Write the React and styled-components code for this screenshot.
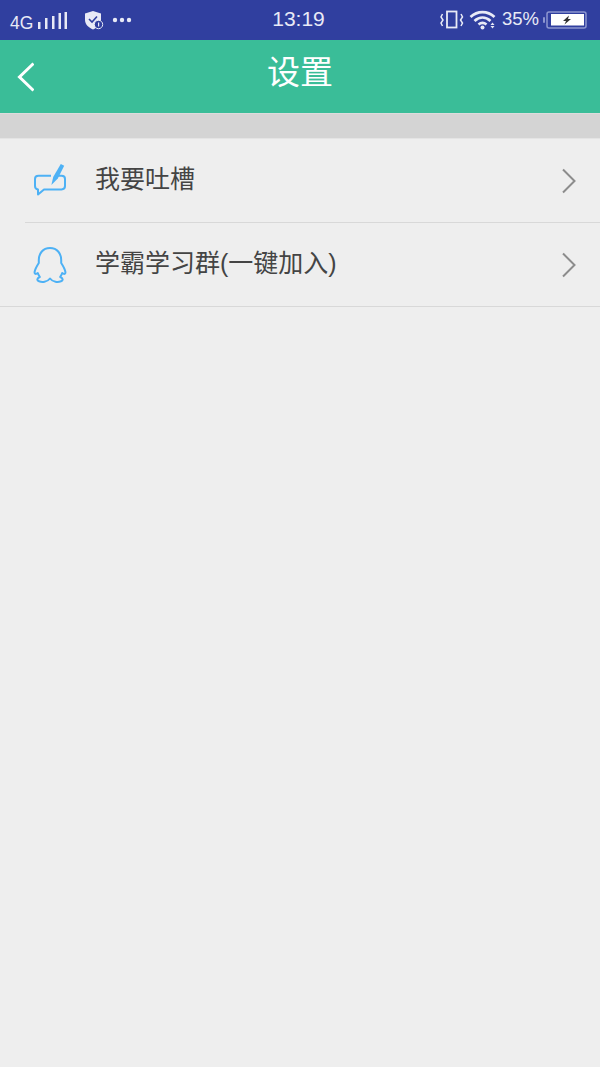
import React from 'react';
import styled, { createGlobalStyle } from 'styled-components';

const Global = createGlobalStyle`
  html, body {
    margin: 0;
    padding: 0;
    background: #eeeeee;
  }
`;

const Page = styled.div`
  width: 600px;
  height: 1067px;
  overflow: hidden;
  background: #eeeeee;
  font-family: 'Liberation Sans', 'Noto Sans CJK SC', sans-serif;
`;

const StatusBar = styled.div`
  height: 40px;
  background: #303f9f;
  color: #e8eaf6;
  display: grid;
  grid-template-columns: 1fr auto 1fr;
  align-items: center;
  padding: 0 13px 0 10px;
`;

const StatusGroup = styled.div`
  display: flex;
  align-items: center;
  justify-content: ${props => (props.$end ? 'flex-end' : 'flex-start')};
`;

const StatusText = styled.span`
  font-size: ${props => props.$size || 18}px;
  line-height: 22px;
  padding: ${props => (props.$low ? '6px 0 0' : '0 0 2px')};
  color: #e8eaf6;
`;

const Gap = styled.span`
  flex: none;
  width: ${props => props.$w}px;
`;

const Header = styled.header`
  height: 73px;
  box-sizing: border-box;
  padding-bottom: 8px;
  background: #3abd98;
  display: flex;
  align-items: center;
  justify-content: center;
  position: relative;
`;

const BackButton = styled.div`
  position: absolute;
  left: 16px;
  top: 22px;
  width: 18px;
  height: 30px;
`;

const Title = styled.h1`
  margin: 0;
  font-size: 33px;
  font-weight: 400;
  color: #ffffff;
  line-height: 40px;
`;

const Spacer = styled.div`
  height: 24px;
  background: #d4d4d4;
  border-top: 1px solid #dcdcdc;
  border-bottom: 1px solid #e4e4e4;
`;

const List = styled.div`
  display: flex;
  flex-direction: column;
`;

const Row = styled.div`
  height: 83px;
  display: flex;
  align-items: center;
  padding: 0 23px 0 ${props => (props.$inset ? '7px' : '32px')};
  border-bottom: 1px solid #d8d8d8;
  margin-left: ${props => (props.$inset ? '25px' : '0')};
`;

const IconSlot = styled.div`
  width: 36px;
  height: 40px;
  display: flex;
  align-items: center;
  justify-content: center;
  margin-right: 27px;
`;

const Label = styled.span`
  flex: 1;
  font-size: 25px;
  color: #444444;
  line-height: 30px;
  padding-bottom: 4px;
`;

const PenIcon = () => (
  <svg width="36" height="36" viewBox="0 0 36 36" fill="none">
    <path
      d="M19 12.8H6.5C4 12.8 3 14 3 16V23C3 25 4 26.2 6 26.4V31.5L12 26.4H29.5C32 26.4 33 25 33 23V16C33 14 32 12.8 29.5 12.8H26"
      stroke="#4db1f5"
      strokeWidth="2"
      strokeLinejoin="round"
    />
    <path d="M28.8 1L32.2 2.8L25.8 15.6L19.4 22L21.2 14Z" fill="#4db1f5" />
  </svg>
);

const PenguinIcon = () => (
  <svg width="36" height="40" viewBox="0 0 36 40" fill="none">
    <path
      d="M18 3C10.5 3 6.8 9 6.8 15V18C5.5 20 3 24 2.6 27C2.4 29 3.8 29.5 5.8 28C6.3 30 7.3 31 7.8 32C5 33 4.5 35.5 7 36.3C10 37.4 15 37.3 18 33.5C21 37.3 26 37.4 29 36.3C31.5 35.5 31 33 28.2 32C28.7 31 29.7 30 30.2 28C32.2 29.5 33.6 29 33.4 27C33 24 30.5 20 29.2 18V15C29.2 9 25.5 3 18 3Z"
      stroke="#4db1f5"
      strokeWidth="2"
      strokeLinejoin="round"
    />
  </svg>
);

const Chevron = () => (
  <svg width="16" height="26" viewBox="0 0 16 26" fill="none">
    <path d="M2 1.5L13.5 13L2 24.5" stroke="#8c8c8c" strokeWidth="2" />
  </svg>
);

const SignalIcon = () => (
  <svg width="32" height="20" viewBox="0 0 32 20" fill="#e8eaf6">
    <rect x="1" y="12" width="2.5" height="7" />
    <rect x="8" y="8" width="2.5" height="11" />
    <rect x="15" y="6" width="2.5" height="13" />
    <rect x="21.5" y="3" width="2.5" height="16" />
    <rect x="27.5" y="2" width="2.5" height="17" />
  </svg>
);

const ShieldIcon = () => (
  <svg width="20" height="20" viewBox="0 0 20 20">
    <path d="M9 1L17 3.5V10C17 14.5 13.5 17.5 9 19.5C4.5 17.5 1 14.5 1 10V3.5Z" fill="#e8eaf6" />
    <path d="M5 9L8 12L13 6.5" stroke="#303f9f" strokeWidth="1.6" fill="none" />
    <circle cx="14.5" cy="14.5" r="4.2" fill="#303f9f" stroke="#e8eaf6" strokeWidth="1" />
    <rect x="14" y="12.5" width="1.2" height="4" fill="#e8eaf6" />
  </svg>
);

const DotsIcon = () => (
  <svg width="20" height="6" viewBox="0 0 20 6" fill="#e8eaf6">
    <circle cx="3" cy="3" r="2.2" />
    <circle cx="10" cy="3" r="2.2" />
    <circle cx="17" cy="3" r="2.2" />
  </svg>
);

const VibrateIcon = () => (
  <svg width="24" height="22" viewBox="0 0 24 22" fill="none" stroke="#e8eaf6">
    <rect x="7" y="2.5" width="9.5" height="16" strokeWidth="1.8" />
    <path d="M2.5 5L1 8L3 11L1 14L2.5 17" strokeWidth="1.5" />
    <path d="M21 5L22.5 8L20.5 11L22.5 14L21 17" strokeWidth="1.5" />
  </svg>
);

const WifiIcon = () => (
  <svg width="28" height="20" viewBox="0 0 28 20" fill="none" stroke="#e8eaf6" strokeWidth="2.8">
    <path d="M1.5 7C8.5 0.5 18.5 0.5 25.5 7" />
    <path d="M5.5 11C10.5 6.5 16.5 6.5 21.5 11" />
    <path d="M9.5 14.5C12 12.5 15 12.5 17.5 14.5" />
    <circle cx="13.5" cy="17.5" r="2" fill="#e8eaf6" stroke="none" />
    <path d="M23.5 12.5L25.5 15H21.5Z M21.5 16H25.5L23.5 18.5Z" fill="#e8eaf6" stroke="none" />
  </svg>
);

const BatteryIcon = () => (
  <svg width="44" height="18" viewBox="0 0 44 18">
    <rect x="0" y="6" width="2" height="6" rx="1" fill="#8c96d0" />
    <rect x="4" y="1" width="39" height="16" rx="2" fill="none" stroke="#8c96d0" strokeWidth="1.5" />
    <rect x="8" y="3" width="33" height="11.5" fill="#ffffff" />
    <path d="M26 4.5L20 10H23L21.5 13.5L28 8H25Z" fill="#333333" />
  </svg>
);

export default function App() {
  return (
    <Page>
      <Global />
      <StatusBar>
        <StatusGroup>
          <StatusText $size={17.5} $low>4G</StatusText>
          <Gap $w={4} />
          <SignalIcon />
          <Gap $w={15} />
          <ShieldIcon />
          <Gap $w={8} />
          <DotsIcon />
        </StatusGroup>
        <StatusText $size={21}>13:19</StatusText>
        <StatusGroup $end>
          <VibrateIcon />
          <Gap $w={5} />
          <WifiIcon />
          <Gap $w={5} />
          <StatusText $size={18.5}>35%</StatusText>
          <Gap $w={4} />
          <BatteryIcon />
        </StatusGroup>
      </StatusBar>
      <Header>
        <BackButton>
          <svg width="18" height="30" viewBox="0 0 18 30" fill="none">
            <path d="M17.5 1.5L3.5 15L17.5 28.5" stroke="#ffffff" strokeWidth="3" />
          </svg>
        </BackButton>
        <Title>设置</Title>
      </Header>
      <Spacer />
      <List>
        <Row $inset>
          <IconSlot>
            <PenIcon />
          </IconSlot>
          <Label>我要吐槽</Label>
          <Chevron />
        </Row>
        <Row>
          <IconSlot>
            <PenguinIcon />
          </IconSlot>
          <Label>学霸学习群(一键加入)</Label>
          <Chevron />
        </Row>
      </List>
    </Page>
  );
}
